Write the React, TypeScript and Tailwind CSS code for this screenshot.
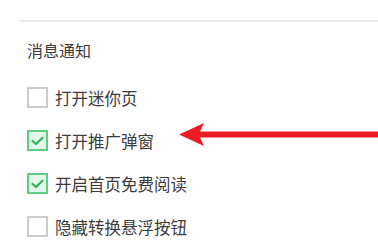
import { useState } from "react"

interface Option {
  label: string
  checked: boolean
}

const initialOptions: Option[] = [
  { label: "打开迷你页", checked: false },
  { label: "打开推广弹窗", checked: true },
  { label: "开启首页免费阅读", checked: true },
  { label: "隐藏转换悬浮按钮", checked: false },
]

function CheckBox({ checked }: { checked: boolean }) {
  if (checked) {
    return (
      <span className="flex h-[21px] w-[21px] shrink-0 items-center justify-center border-2 border-[#5ccf85] bg-[#e3f6e9]">
        <svg width="13" height="10" viewBox="0 0 13 10" fill="none">
          <path d="M1.5 5 L5 8 L11.5 1.8" stroke="#2fb35d" strokeWidth="2.2" strokeLinecap="round" strokeLinejoin="round" />
        </svg>
      </span>
    )
  }
  return <span className="block h-[21px] w-[21px] shrink-0 border-2 border-[#cbcbcb] bg-white" />
}

export default function App() {
  const [options, setOptions] = useState(initialOptions)

  const toggle = (index: number) => {
    setOptions(prev => prev.map((o, i) => (i === index ? { ...o, checked: !o.checked } : o)))
  }

  return (
    <div
      className="relative h-[243px] w-[378px] overflow-hidden bg-white pt-5 text-[#3c3c3c]"
      style={{ fontFamily: '"Noto Sans CJK SC", "Noto Sans", sans-serif' }}
    >
      {/* 分隔线 */}
      <div className="ml-5 h-[2px] bg-[#e9e9e9]" />

      <div className="pl-[27px]">
        <h3 className="mt-[18px] text-[16px] leading-[20px] font-normal">消息通知</h3>

        <div className="mt-[16px]">
          {options.map((option, index) => (
            <label
              key={option.label}
              className="flex h-[43px] cursor-pointer items-center gap-[7px]"
              onClick={() => toggle(index)}
            >
              <CheckBox checked={option.checked} />
              <span className="text-[16.5px] leading-[20px]">{option.label}</span>
            </label>
          ))}
        </div>
      </div>

      {/* 红色箭头标注 */}
      <svg className="absolute left-[179px] top-[121px]" width="199" height="27" viewBox="0 0 199 27">
        <path d="M0 13.5 L25 2 L21 10.5 L199 10.5 L199 16.5 L21 16.5 L25 25 Z" fill="#ec1c24" />
      </svg>
    </div>
  )
}
